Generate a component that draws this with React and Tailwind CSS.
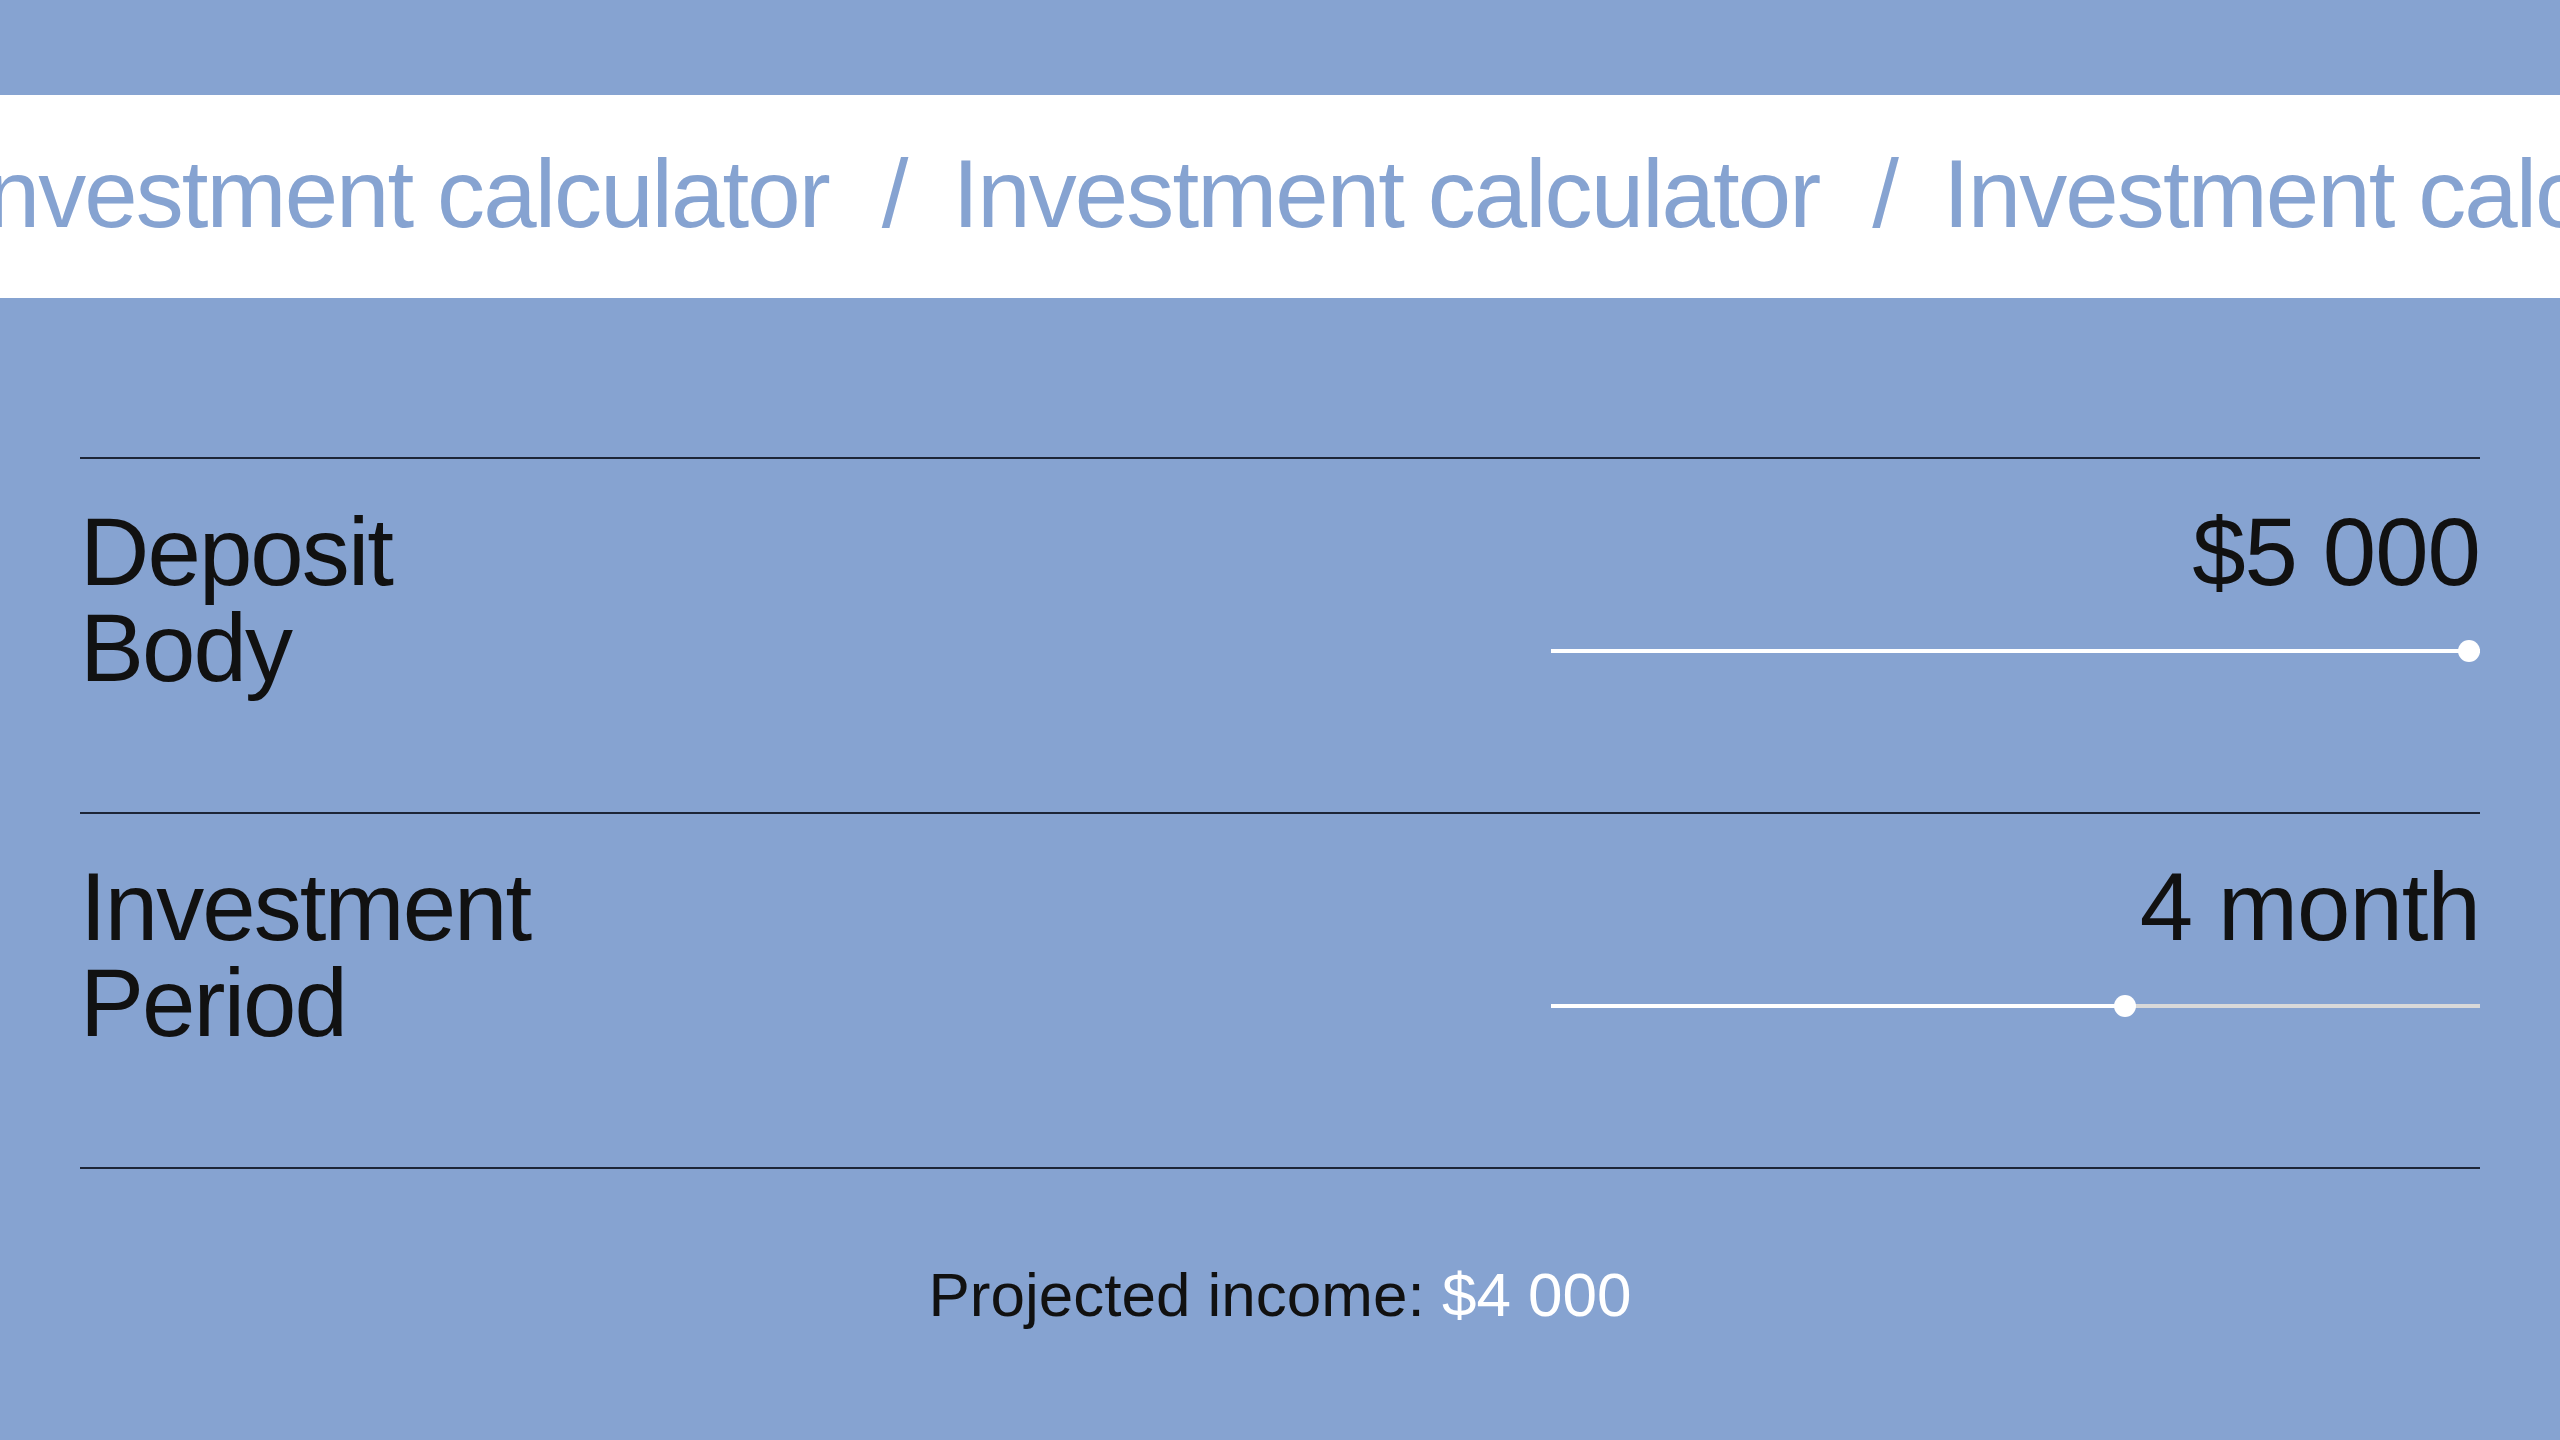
import React, { useState } from 'react';

const FONT = { fontFamily: '"Liberation Sans", Arial, sans-serif' };

// Banner text repeated across the ribbon
const Ribbon = () => {
  const items = [0, 1, 2, 3];
  return (
    <div className="bg-white h-[203px] flex items-center overflow-hidden pb-[6px]">
      <div className="flex items-center whitespace-nowrap -ml-[38px] text-[96px] leading-none tracking-[-0.02em] text-[#86a3d1]">
        {items.map(i => (
          <div key={i} className="flex items-center shrink-0">
            <span>Investment calculator</span>
            <span className="ml-[53px] mr-[46px]">/</span>
          </div>
        ))}
      </div>
    </div>
  );
};

const Slider = ({ percent }) => (
  <div className="relative h-[22px] flex items-center">
    <div className="w-full h-[4px] bg-[#d9d9d9] flex">
      <div className="h-full bg-white" style={{ width: `${percent}%` }} />
    </div>
    <div
      className="absolute top-0 w-[22px] h-[22px] rounded-full bg-white -translate-x-1/2"
      style={{ left: `calc(11px + (100% - 22px) * ${percent / 100})` }}
    />
  </div>
);

const Row = ({ title, value, percent }) => (
  <div className="grid grid-cols-[1fr_929px] border-t-2 border-[#1c2537] pt-[45px] pb-[116px]">
    <div className="text-[96px] leading-[96px] tracking-[-0.02em] text-[#111111]">
      {title.map(t => <div key={t}>{t}</div>)}
    </div>
    <div>
      <div className="text-right text-[96px] leading-[96px] tracking-[-0.01em] text-[#111111]">{value}</div>
      <div className="mt-[40px]">
        <Slider percent={percent} />
      </div>
    </div>
  </div>
);

export default function App() {
  const [deposit] = useState(5000);
  const [months] = useState(4);

  const fmt = n => '$' + n.toLocaleString('en-US').replace(',', ' ');

  return (
    <div className="min-h-screen bg-[#86a3d1] pt-[95px]" style={FONT}>
      <Ribbon />

      <div className="px-[80px] pt-[159px]">
        <Row title={['Deposit', 'Body']} value={fmt(deposit)} percent={100} />
        <Row title={['Investment', 'Period']} value={`${months} month`} percent={62.1} />
        <div className="border-t-2 border-[#1c2537]" />

        <div className="pt-[95px] text-center text-[62px] leading-none text-[#111111]">
          Projected income: <span className="text-white">{fmt(4000)}</span>
        </div>
      </div>
    </div>
  );
}
